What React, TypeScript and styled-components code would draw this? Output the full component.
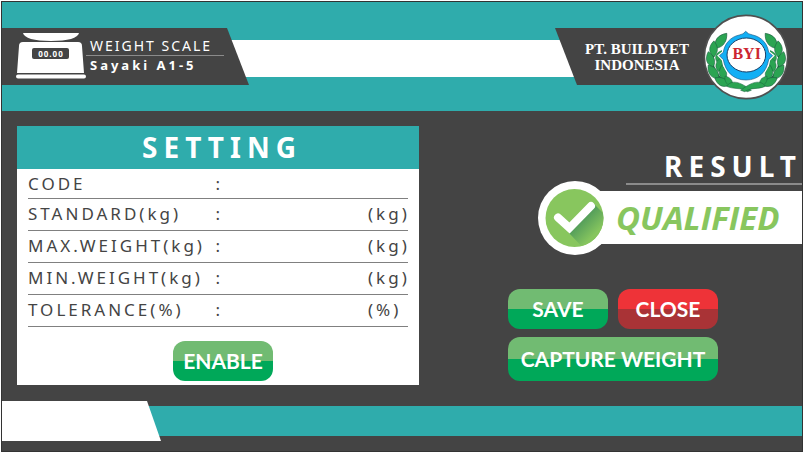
import React from 'react';
import styled, { createGlobalStyle } from 'styled-components';

const teal = '#2facac';
const dark = '#444444';

const GlobalStyle = createGlobalStyle`
  *, *::before, *::after { box-sizing: border-box; }
  body { margin: 0; background: #ffffff; font-family: "Noto Sans", "Open Sans", sans-serif; }
  h1, h2, p { margin: 0; }
`;

const Frame = styled.div`
  display: flex;
  flex-direction: column;
  min-height: calc(100vh - 2px);
  margin: 1px;
  border: 1px solid #333333;
  background: ${dark};
`;

const Header = styled.header`
  padding: 26px 0;
  background: ${teal};
`;

const HeaderBar = styled.div`
  display: flex;
  justify-content: space-between;
  height: 57px;
  background: linear-gradient(${teal} 12px, #ffffff 12px 49px, ${teal} 49px);
`;

const Brand = styled.div`
  display: flex;
  align-items: center;
  width: 247px;
  padding-left: 14px;
  color: #ffffff;
  background: ${dark};
  clip-path: polygon(0 0, 225px 0, 100% 100%, 0 100%);
`;

const BrandText = styled.div`
  flex: 1;
  margin: 0 25px 2px 0;
`;

const BrandKind = styled.p`
  padding-left: 4px;
  border-bottom: 1px solid #8b8b8b;
  font-size: 14px;
  line-height: 19px;
  letter-spacing: 2px;
  white-space: nowrap;
`;

const BrandModel = styled.p`
  padding-left: 4px;
  font-size: 13px;
  font-weight: 700;
  line-height: 19px;
  letter-spacing: 3px;
  white-space: nowrap;
`;

const Company = styled.div`
  position: relative;
  display: flex;
  align-items: center;
  justify-content: flex-end;
  gap: 14px;
  width: 247px;
  padding-right: 13px;
  isolation: isolate;

  &::before {
    content: "";
    position: absolute;
    inset: 0;
    z-index: -1;
    background: ${dark};
    clip-path: polygon(0 0, 100% 0, 100% 100%, 22px 100%);
  }
`;

const CompanyName = styled.p`
  color: #ffffff;
  font-family: "Liberation Serif", serif;
  font-size: 15px;
  font-weight: 700;
  line-height: 16px;
  text-align: center;
  white-space: nowrap;
`;

const Main = styled.main`
  display: grid;
  grid-template-columns: 402fr 383fr;
  padding: 15px 0 15px 15px;
`;

const Panel = styled.form`
  display: flex;
  flex-direction: column;
  padding-bottom: 4px;
  background: #ffffff;
`;

const PanelTitle = styled.h1`
  padding-left: 8px;
  color: #ffffff;
  background: ${teal};
  font-size: 28px;
  line-height: 43px;
  letter-spacing: 6px;
  text-align: center;
`;

const Fields = styled.div`
  margin: 0 11px 14px;
`;

const Field = styled.div`
  display: grid;
  grid-template-columns: 195px 1fr 40px;
  align-items: center;
  height: 32px;
  padding-bottom: 2px;
  border-bottom: 1px solid #808080;
  color: #444444;
  font-size: 17px;
  line-height: 24px;
  letter-spacing: 3px;
  white-space: nowrap;

  &:first-child {
    height: 30px;
    padding-bottom: 0;
  }
`;

const FieldLabel = styled.label`
  display: flex;
  justify-content: space-between;
`;

const FieldInput = styled.input`
  min-width: 0;
  width: 100%;
  padding: 0 8px;
  border: 0;
  background: transparent;
  color: inherit;
  font: inherit;
`;

const Button = styled.button<{ $tone?: 'green' | 'red'; $tall?: boolean }>`
  height: ${p => (p.$tall ? 44 : 40)}px;
  min-width: 100px;
  padding: 0 0 2px;
  border: 0;
  border-radius: 12px;
  color: #ffffff;
  background: ${p =>
    p.$tone === 'red'
      ? 'linear-gradient(#ee3338 50%, #a93336 50%)'
      : 'linear-gradient(#71bb72 50%, #00a859 50%)'};
  font-family: Lato, sans-serif;
  font-size: 21px;
  font-weight: 700;
  white-space: nowrap;
  cursor: pointer;
`;

const EnableButton = styled(Button)`
  align-self: center;
  margin-left: 10px;
`;

const Side = styled.section`
  display: flex;
  flex-direction: column;
  align-items: flex-end;
  padding-top: 23px;
`;

const ResultTitle = styled.h2`
  width: 176px;
  border-bottom: 2px solid #8b8b8b;
  color: #ffffff;
  font-size: 28px;
  line-height: 34px;
  letter-spacing: 6px;
  text-align: right;
  white-space: nowrap;
`;

const Verdict = styled.div`
  display: flex;
  align-items: center;
  width: 264px;
  height: 53px;
  margin-top: 6px;
  background: linear-gradient(90deg, transparent 37px, #ffffff 37px);
`;

const VerdictText = styled.p`
  margin-left: 4px;
  color: #88c65e;
  font-family: "Open Sans", "Noto Sans", sans-serif;
  font-size: 33px;
  font-style: italic;
  font-weight: 700;
  line-height: 53px;
`;

const Actions = styled.div`
  display: grid;
  grid-template-columns: 1fr 1fr;
  gap: 8px 10px;
  width: 210px;
  margin: 45px 84px 0 0;
`;

const CaptureButton = styled(Button)`
  grid-column: 1 / -1;
`;

const Footer = styled.footer`
  display: flex;
  height: 40px;
  margin: auto 0 10px;
  background: linear-gradient(${dark} 5px, ${teal} 5px 35px, ${dark} 35px);
`;

const FooterTab = styled.div`
  width: 159px;
  background: #ffffff;
  clip-path: polygon(0 0, 145px 0, 100% 100%, 0 100%);
`;

const Drawing = styled.svg`
  display: block;
  flex: none;
`;

const ScaleText = styled.text`
  font-family: "Noto Sans", sans-serif;
  font-size: 8px;
  font-weight: 700;
  letter-spacing: 1px;
`;

const LogoText = styled.text`
  font-family: "Liberation Serif", serif;
  font-size: 48px;
  font-weight: 700;
`;

function ScaleIcon() {
  return (
    <Drawing width="70" height="47" viewBox="0 0 70 47" aria-hidden="true">
      <path d="M7 0H63C62 5 52 8 35 8S8 5 7 0Z" fill="#fff" />
      <path d="M7 9H62Q66 9 66 13L68 40H1L3 13Q3 9 7 9Z" fill="#fff" />
      <rect x="0" y="41.500" width="70" height="4" rx="2" fill="#fff" />
      <rect x="16" y="15" width="37" height="11" rx="2" fill={dark} />
      <ScaleText x="35" y="23.500" textAnchor="middle" fill="#fff">00.00</ScaleText>
    </Drawing>
  );
}

const leaf = 'M0 0C-16 -12 -14 -32 3 -46C14 -30 15 -14 0 0Z';
const leaves = [
  [48, 116, 32, 1.2],
  [42, 142, -4, 1.05],
  [50, 156, 22, 0.8],
  [40, 172, -22, 1.05],
  [56, 186, 4, 0.9],
  [56, 206, -42, 1.1],
  [74, 212, -14, 1],
  [88, 226, -68, 1.05],
  [98, 228, -42, 0.8],
];

function Laurel() {
  return (
    <g fill="#2ba452" stroke="#175c3c" strokeWidth="1.500">
      <path d="M48 116C26 155 42 205 96 228" fill="none" strokeWidth="4" />
      {leaves.map(([x, y, r, s]) => (
        <path key={`${x}-${y}`} d={leaf} transform={`translate(${x} ${y}) rotate(${r}) scale(${s})`} />
      ))}
      <path d="M80 230C94 210 118 214 154 242L142 246C120 232 102 240 80 230Z" />
    </g>
  );
}

const ring =
  'M137 65Q144 74 158 76C186 82 203 104 206 128L218 138L206 150C200 186 176 211 138 211S76 186 70 150L58 138L70 128C73 104 90 82 118 76Q131 74 137 65Z';

function CompanyLogo() {
  return (
    <Drawing width="86" height="86" viewBox="9 13 258 258" role="img" aria-label="BYI">
      <circle cx="138" cy="142" r="125" fill="#fff" stroke="#505050" strokeWidth="5" />
      <Laurel />
      <g transform="translate(276 0) scale(-1 1)"><Laurel /></g>
      <path d={ring} fill="#fff" stroke="#fff" strokeWidth="9" />
      <path d={ring} fill="#12aff5" stroke="#1f5d88" strokeWidth="2" />
      <ellipse cx="139" cy="136" rx="58" ry="51" fill="#fff" stroke="#193f67" strokeWidth="3" />
      <LogoText x="140" y="149" textAnchor="middle" fill="#cc2630">BYI</LogoText>
    </Drawing>
  );
}

function CheckBadge() {
  return (
    <Drawing width="74" height="74" viewBox="0 0 74 74" aria-hidden="true">
      <defs>
        <linearGradient id="shade" gradientUnits="userSpaceOnUse" x1="40" y1="38" x2="56" y2="54">
          <stop offset="0" stopColor="#4a965a" />
          <stop offset="1" stopColor="#86c55e" />
        </linearGradient>
        <clipPath id="disc"><circle cx="36.500" cy="37" r="29" /></clipPath>
      </defs>
      <circle cx="37" cy="37" r="37" fill="#fff" />
      <circle cx="36.500" cy="37" r="29" fill="#88c65e" />
      <path d="M31 52L56 23L76 43L50 72Z" fill="url(#shade)" clipPath="url(#disc)" />
      <path d="M20 36.500L31.500 47L53 25" fill="none" stroke="#fff" strokeWidth="8" strokeLinecap="round" />
    </Drawing>
  );
}

const fields = [
  { id: 'code', label: 'CODE', unit: '' },
  { id: 'standard', label: 'STANDARD(kg)', unit: '(kg)' },
  { id: 'max', label: 'MAX.WEIGHT(kg)', unit: '(kg)' },
  { id: 'min', label: 'MIN.WEIGHT(kg)', unit: '(kg)' },
  { id: 'tolerance', label: 'TOLERANCE(%)', unit: '(%)' },
];

export default function App() {
  return (
    <>
      <GlobalStyle />
      <Frame>
        <Header>
          <HeaderBar>
            <Brand>
              <ScaleIcon />
              <BrandText>
                <BrandKind>WEIGHT SCALE</BrandKind>
                <BrandModel>Sayaki A1-5</BrandModel>
              </BrandText>
            </Brand>
            <Company>
              <CompanyName>PT. BUILDYET<br />INDONESIA</CompanyName>
              <CompanyLogo />
            </Company>
          </HeaderBar>
        </Header>
        <Main>
          <Panel onSubmit={e => e.preventDefault()}>
            <PanelTitle>SETTING</PanelTitle>
            <Fields>
              {fields.map(f => (
                <Field key={f.id}>
                  <FieldLabel htmlFor={f.id}><span>{f.label}</span><span>:</span></FieldLabel>
                  <FieldInput id={f.id} />
                  <span>{f.unit}</span>
                </Field>
              ))}
            </Fields>
            <EnableButton type="button">ENABLE</EnableButton>
          </Panel>
          <Side>
            <ResultTitle>RESULT</ResultTitle>
            <Verdict>
              <CheckBadge />
              <VerdictText>QUALIFIED</VerdictText>
            </Verdict>
            <Actions>
              <Button type="button">SAVE</Button>
              <Button type="button" $tone="red">CLOSE</Button>
              <CaptureButton type="button" $tall>CAPTURE WEIGHT</CaptureButton>
            </Actions>
          </Side>
        </Main>
        <Footer><FooterTab /></Footer>
      </Frame>
    </>
  );
}
